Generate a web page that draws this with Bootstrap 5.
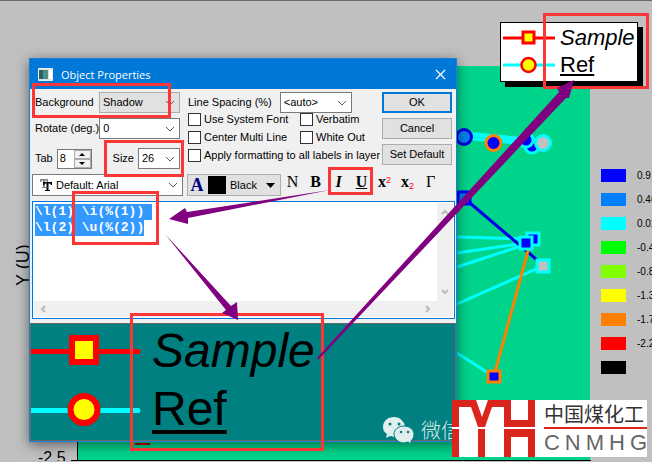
<!DOCTYPE html>
<html lang="en">
<head>
<meta charset="utf-8">
<meta name="viewport" content="width=device-width, initial-scale=1">
<title>Object Properties</title>
<link href="https://cdn.jsdelivr.net/npm/bootstrap@5.3.0/dist/css/bootstrap.min.css" rel="stylesheet">
<style>
body{background:#c0c0c0;font-family:"Liberation Sans",Arial,sans-serif;font-size:11px;line-height:13px;color:#000}
.desk{min-height:100vh;border-top:1px solid #696969}
.plot{left:0;top:-1px;z-index:0}
.notes{left:0;top:-1px;z-index:5;pointer-events:none}
.win{left:29px;top:57px;width:428px;z-index:2;background:#f0f0f0;border:1px solid #1a80dc;box-shadow:0 3px 12px rgba(0,0,0,.5)}
.titlebar{background:#0078d7;color:#fff;height:30px;padding:0 10px 0 8px;font-family:"Open Sans","Noto Sans",sans-serif;font-size:11px}
.titlebar button{background:none;border:0;padding:0;line-height:0}
.form-area{padding:3px 4px 0 2px}
.col-a{width:148px;white-space:nowrap}
.col-a>div{padding-left:3px}
.col-m{padding-left:8px}
.pick{appearance:none;border:1px solid #7a7a7a;border-radius:0;height:21px;padding:0 20px 0 3px;color:#000;background:#fff url("data:image/svg+xml,%3Csvg xmlns='http://www.w3.org/2000/svg' width='10' height='6'%3E%3Cpath d='M1 1l4 4 4-4' fill='none' stroke='%23606060'/%3E%3C/svg%3E") no-repeat right 4px center}
.pick-gray{background-color:#e1e1e1;border-color:#adadad}
.w-main{width:81px;flex:none}.w-size{width:42px}.w-auto2{width:72px}
.gap-row{margin-top:5px}
.gap-row-lg{margin-top:9px}
.tab-in{width:35px;height:20px;border:1px solid #7a7a7a;background:#fff}
.tab-in input{width:16px;border:0;padding:0 0 0 2px;background:none}
.spin button{border:1px solid #adadad;background:#f0f0f0;padding:0;width:17px;height:9px;line-height:0;display:flex;align-items:center;justify-content:center}
.tick{appearance:none;width:13px;height:13px;border:1px solid #333;background:#fff;margin:0}
.ticks{display:grid;grid-template-columns:112px 1fr;row-gap:5px}
.ticks label{gap:3px;height:13px;white-space:nowrap}
.wide{grid-column:1 / 3}
.dlg-btns{gap:5px}
.dlg-btn{width:70px;height:21px;border:1px solid #adadad;background:#e1e1e1;padding:0;color:#000}
.dlg-ok{border:2px solid #0078d7}
.tools{padding:5px 4px 0 2px}
.font-box{width:151px;height:22px;border:1px solid #7a7a7a;background:#fff;padding-left:6px}
.font-box .pick{border:0;height:20px;background-color:transparent}
.ink{width:94px;height:22px;border:1px solid #adadad;background:#e1e1e1;padding:0 5px 0 2px;color:#000}
.ink-a,.fmt{font-family:"Liberation Serif",serif;font-weight:700}
.ink-a{font-size:18px;color:#000080;width:14px}
.chip{width:18px;height:18px;background:#000}
.fmt{border:0;background:none;padding:0;width:23px;height:15px;font-size:16px;line-height:15px;color:#000}
.fmt-n{font-weight:400}
.fmt i,.fmt u{font-weight:700}
.fmt u{text-decoration-thickness:1px;text-underline-offset:1px}
.fmt sup,.fmt sub{font-family:"Liberation Sans",sans-serif;font-size:9px;font-weight:400;color:#f00}
.editor{margin:5px 1px 0 2px;border:1px solid #0078d7;background:#fff;height:118px;padding:1px}
.editor textarea{border:0;outline:0;resize:none;overflow:hidden;padding:1px 0 0 1px;font:700 13px/16px "Liberation Mono",monospace;color:#000;background:#fff}
.editor textarea::selection{background:#3399ff;color:#fff}
.sbar{background:#f0f0f0}
.sbar-v{width:16px;padding:6px 0}
.sbar-h{height:16px;padding:0 22px 0 6px}
.preview{margin-top:4px;border:1px solid #696969;background:#008080}
.sample{height:58px;font-size:48px;line-height:54px;gap:11px}
.sample u{text-decoration-thickness:4px;text-underline-offset:5px;text-decoration-skip-ink:none}
.legend{left:500px;top:21px;z-index:1;background:#fff;border:1px solid #000;box-shadow:5px 5px 0 #000;padding:1px 2px 3px 2px}
.legend div{height:27px;font-size:22px;line-height:27px;gap:5px}
.legend u{text-decoration-thickness:2px;text-underline-offset:2px;text-decoration-skip-ink:none}
.scale{left:601px;top:168px;width:51px;z-index:1;gap:11px;font-size:10px}
.scale div{gap:11px;height:13px;white-space:nowrap}
.swatch{width:25px;height:13px;flex:none}
.s1{background:#00f}.s2{background:#0080ff}.s3{background:#0ff}.s4{background:#0f0}.s5{background:#80ff00}.s6{background:#ff0}.s7{background:#ff8000}.s8{background:#f00}.s9{background:#000}
.wechat{left:383px;top:415px;z-index:3;color:#d5e8e8;font:300 20px/26px "Noto Sans CJK SC",sans-serif;gap:6px;white-space:nowrap}
.brand{left:452px;top:399px;width:195px;height:57px;z-index:4;background:#fff}
.brand-text{width:103px;color:#333}
.brand-cn{font:20px/27px "Noto Sans CJK SC",sans-serif;border-bottom:2px solid #da251d;white-space:nowrap}
.brand-en{font-size:22px;line-height:28px;color:#666}
</style>
<script src="https://cdn.jsdelivr.net/npm/bootstrap@5.3.0/dist/js/bootstrap.bundle.min.js"></script>
</head>
<body>
<main class="desk position-relative overflow-hidden">

<svg class="plot position-absolute w-100 h-100" aria-label="Plot">
  <path d="M78 66H590V460H78Z" fill="#00d48b"/>
  <path d="M77.500 66V462M71 460.500H590M114.500 460v2M150.500 460v2M187.500 460v2M223.500 460v2M260.500 460v2M297.500 460v2M334.500 460v2M370.500 460v2M407.500 460v2M444.500 460v2M481.500 460v2M517.500 460v2M554.500 460v2M590.500 460v2" stroke="#000" fill="none"/>
  <path d="M135 444h15" stroke="#c00000" stroke-width="2"/>
  <text x="38" y="463" font-size="16">-2.5</text>
  <text transform="translate(29 286) rotate(-90)" font-size="18">Y (U)</text>
  <g fill="none" stroke-width="3" stroke="#0ff">
    <path d="M464 133L527 139M464 138L527 144M470 135L543 143"/>
    <path d="M457 237L526 239M457 253L526 243M457 267L524 245M457 304L543 266M457 353L493 376"/>
    <path d="M464 198L543 265" stroke="#0000e8"/>
    <path d="M494 376L529 247" stroke="#ff8000"/>
  </g>
  <g stroke-width="3">
    <circle cx="464" cy="137" r="7.500" fill="#0080f0" stroke="#0000dc"/>
    <circle cx="532" cy="146" r="7" fill="#00f" stroke="#0ff"/>
    <circle cx="526" cy="140" r="7" fill="#00f" stroke="#0ff"/>
    <circle cx="493.500" cy="143" r="7.500" fill="#00f" stroke="#ff8000"/>
    <circle cx="543" cy="143" r="7.500" fill="#c0c0c0" stroke="#0ff"/>
    <path d="M458 192h12v12h-12z" fill="#0080f0" stroke="#00f"/>
    <path d="M527 233h12v12h-12z" fill="#00f" stroke="#0ff"/>
    <path d="M520 237h12v12h-12z" fill="#00f" stroke="#0ff"/>
    <path d="M537 260h12v12h-12z" fill="#c0c0c0" stroke="#0ff"/>
    <path d="M488 371h12v11h-12z" fill="#00f" stroke="#ff8000"/>
  </g>
</svg>

<section class="legend position-absolute">
  <div class="d-flex align-items-center"><svg width="52" height="18"><path d="M1 9h50" stroke="#f00" stroke-width="3" stroke-linecap="round"/><path d="M20 3h11v11H20z" fill="#ff0" stroke="#f00" stroke-width="3"/></svg><i>Sample</i></div>
  <div class="d-flex align-items-center"><svg width="52" height="18"><path d="M1 9h50" stroke="#0ff" stroke-width="3" stroke-linecap="round"/><circle cx="25.500" cy="9" r="7" fill="#ff0" stroke="#f00" stroke-width="2.500"/></svg><u>Ref</u></div>
</section>

<section class="scale position-absolute d-flex flex-column overflow-hidden">
  <div class="d-flex"><span class="swatch s1"></span>0.9</div>
  <div class="d-flex"><span class="swatch s2"></span>0.46</div>
  <div class="d-flex"><span class="swatch s3"></span>0.02</div>
  <div class="d-flex"><span class="swatch s4"></span>-0.4</div>
  <div class="d-flex"><span class="swatch s5"></span>-0.8</div>
  <div class="d-flex"><span class="swatch s6"></span>-1.3</div>
  <div class="d-flex"><span class="swatch s7"></span>-1.7</div>
  <div class="d-flex"><span class="swatch s8"></span>-2.2</div>
  <div class="d-flex"><span class="swatch s9"></span></div>
</section>

<form class="win position-absolute">
  <header class="titlebar d-flex align-items-center">
    <svg width="15" height="13" class="me-2"><path d="M.5.500h14v12H.5z" fill="#ddd" stroke="#eee"/><path d="M1 2h9v9H1z" fill="#4e8f86"/><path d="M1 2h4v9H1z" fill="#2c5d6d"/><path d="M11 2h3v9h-3z" fill="#fff"/></svg>
    <span class="flex-grow-1">Object Properties</span>
    <button type="button" aria-label="Close"><svg width="11" height="11"><path d="M1 1l9 9M10 1l-9 9" stroke="#fff" stroke-width="1.200"/></svg></button>
  </header>

  <div class="form-area d-flex">
    <div class="col-a d-flex flex-column">
      <div class="d-flex align-items-center justify-content-between"><label for="bg">Background</label><select id="bg" class="pick pick-gray w-main"><option>Shadow</option></select></div>
      <div class="d-flex align-items-center justify-content-between gap-row"><label for="rot">Rotate (deg.)</label><select id="rot" class="pick w-main"><option>0</option></select></div>
      <div class="d-flex align-items-center gap-row-lg">
        <label for="tab" class="me-1">Tab</label>
        <div class="tab-in d-flex align-items-center"><input id="tab" value="8"><span class="spin"><button type="button" aria-label="Increase"><svg width="6" height="3"><path d="M0 3l3-3 3 3z"/></svg></button><button type="button" aria-label="Decrease"><svg width="6" height="3"><path d="M0 0h6l-3 3z"/></svg></button></span></div>
        <label for="size" class="ms-auto me-1">Size</label><select id="size" class="pick w-size"><option>26</option></select>
      </div>
    </div>

    <div class="col-m flex-grow-1">
      <div class="d-flex align-items-center"><label for="spacing" class="me-2">Line Spacing (%)</label><select id="spacing" class="pick w-auto2"><option>&lt;auto&gt;</option></select></div>
      <div class="ticks">
        <label class="d-flex align-items-center"><input type="checkbox" class="tick">Use System Font</label>
        <label class="d-flex align-items-center"><input type="checkbox" class="tick">Verbatim</label>
        <label class="d-flex align-items-center"><input type="checkbox" class="tick">Center Multi Line</label>
        <label class="d-flex align-items-center"><input type="checkbox" class="tick">White Out</label>
        <label class="d-flex align-items-center wide"><input type="checkbox" class="tick">Apply formatting to all labels in layer</label>
      </div>
    </div>

    <div class="dlg-btns d-flex flex-column">
      <button type="button" class="dlg-btn dlg-ok">OK</button>
      <button type="button" class="dlg-btn">Cancel</button>
      <button type="button" class="dlg-btn">Set Default</button>
    </div>
  </div>

  <div class="tools d-flex">
    <div class="font-box d-flex align-items-center me-1">
      <svg width="14" height="14"><path d="M1 1h8v3H8L7 2.500H6V9h1v1H3V9h1V2.500H3L2 4H1z" fill="#888"/><path d="M4 4h9v3h-1l-1-1.500H9.500V12H11v1H6v-1h1.500V5.500H6L5 7H4z"/></svg>
      <select class="pick flex-grow-1" aria-label="Font"><option>Default: Arial</option></select>
    </div>
    <button type="button" class="ink d-flex align-items-center"><span class="ink-a">A</span><span class="chip mx-1"></span>Black<svg width="9" height="5" class="ms-auto"><path d="M0 0h9L4.500 5z"/></svg></button>
    <div class="d-flex">
      <button type="button" class="fmt fmt-n">N</button>
      <button type="button" class="fmt">B</button>
      <button type="button" class="fmt"><i>I</i></button>
      <button type="button" class="fmt"><u>U</u></button>
      <button type="button" class="fmt">x<sup>2</sup></button>
      <button type="button" class="fmt">x<sub>2</sub></button>
      <button type="button" class="fmt fmt-n">Γ</button>
    </div>
  </div>

  <div class="editor d-flex flex-column">
    <div class="d-flex flex-grow-1">
      <textarea id="code" class="flex-grow-1" aria-label="Label text" spellcheck="false">\l(1) \i(%(1))
\l(2) \u(%(2))</textarea>
      <div class="sbar sbar-v d-flex flex-column align-items-center justify-content-between">
        <svg width="8" height="6"><path d="M1 5l3-3 3 3" fill="none" stroke="#bbb" stroke-width="2"/></svg>
        <svg width="8" height="6"><path d="M1 1l3 3 3-3" fill="none" stroke="#bbb" stroke-width="2"/></svg>
      </div>
    </div>
    <div class="sbar sbar-h d-flex align-items-center justify-content-between">
      <svg width="6" height="8"><path d="M5 1L2 4l3 3" fill="none" stroke="#bbb" stroke-width="2"/></svg>
      <svg width="6" height="8"><path d="M1 1l3 3-3 3" fill="none" stroke="#bbb" stroke-width="2"/></svg>
    </div>
  </div>

  <div class="preview">
    <div class="sample d-flex"><svg width="110" height="54"><path d="M0 27.500h107" stroke="#f00" stroke-width="5" stroke-linecap="round"/><path d="M41 14h24v24H41z" fill="#ff0" stroke="#f00" stroke-width="6"/></svg><i>Sample</i></div>
    <div class="sample d-flex"><svg width="110" height="54"><path d="M0 28.500h107" stroke="#0ff" stroke-width="5" stroke-linecap="round"/><circle cx="53" cy="27.500" r="13.500" fill="#ff0" stroke="#f00" stroke-width="6"/></svg><u>Ref</u></div>
  </div>
</form>

<div class="wechat position-absolute d-flex align-items-center">
  <svg width="32" height="28"><path d="M11 1C5 1 0 5 0 11c0 3 1 5 4 7l-1 4 4-2 5 1c6 0 10-5 10-10S17 1 11 1z" fill="#e0eeee"/><circle cx="7" cy="8" r="1.500" fill="#008080"/><circle cx="16" cy="8" r="1.500" fill="#008080"/><path d="M21 10c-6 0-10 4-10 8s4 9 10 9l4-1 3 2v-3c2-2 3-4 3-7 0-4-4-8-10-8z" fill="#e0eeee" stroke="#008080"/><circle cx="18" cy="16" r="1.300" fill="#008080"/><circle cx="25" cy="16" r="1.300" fill="#008080"/></svg>
  <span>微信</span>
</div>

<aside class="brand position-absolute d-flex justify-content-between">
  <svg width="83" height="57"><path fill="#da251d" d="M0 0H24L30 17 36 0H59V20H76V0H83V27H52V7H40L33 27H26L19 7H7V27H0zM0 29H7V57H0zM26 29H33V57H26zM52 29H83V57H76V37H59V57H52z"/></svg>
  <div class="brand-text"><div class="brand-cn">中国煤化工</div><div class="brand-en d-flex justify-content-between"><span>C</span><span>N</span><span>M</span><span>H</span><span>G</span></div></div>
</aside>

<svg class="notes position-absolute w-100 h-100" aria-hidden="true">
  <g fill="none" stroke="#fc3636" stroke-width="3">
    <path d="M33.500 84.500h136v32h-136zM105.500 141.500h77v34h-77zM329.500 168.500h42v25h-42zM73.500 192.500h84v51h-84zM131.500 314.500h191v135h-191zM544.500 14.500h103v73h-103z"/>
  </g>
  <path fill="#800080" d="M330 190L187 212 185 208 169 219 188 224V218zM165 234L226 310 222 313 238 320 237 302 231 306zM318 360L566 98 569 98 574 80 557 88 559 92 317 358z"/>
</svg>
</main>
<script>
var code = document.getElementById('code');
code.focus();
code.select();
</script>
</body>
</html>
